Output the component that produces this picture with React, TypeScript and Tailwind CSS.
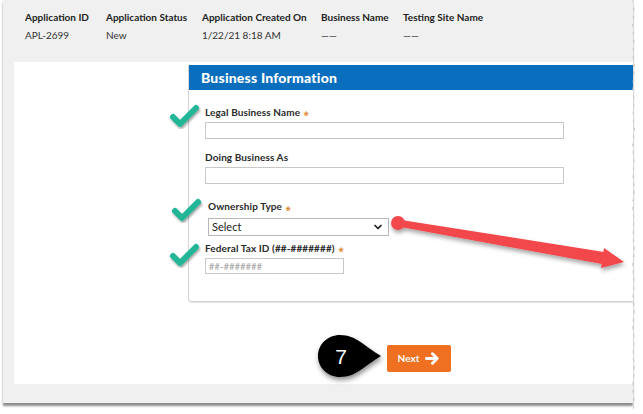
import { ChevronDown } from 'lucide-react';

const columns = [
  { label: 'Application ID', value: 'APL-2699', w: 'w-[81px]' },
  { label: 'Application Status', value: 'New', w: 'w-[96px]' },
  { label: 'Application Created On', value: '1/22/21 8:18 AM', w: 'w-[119px]' },
  { label: 'Business Name', value: '——', w: 'w-[82px]' },
  { label: 'Testing Site Name', value: '——', w: 'w-[100px]' },
];

const Star = () => <span className="ml-[3px] text-[7px] text-[#e0913f] align-middle">★</span>;

const Check = ({ className }: { className: string }) => (
  <svg className={`absolute ${className}`} width="32" height="28" viewBox="0 0 32 28">
    <defs>
      <filter id="cs" x="-30%" y="-30%" width="160%" height="160%">
        <feDropShadow dx="1" dy="2" stdDeviation="1.2" floodColor="#000" floodOpacity="0.35" />
      </filter>
    </defs>
    <path d="M4 14 L11 21 L27 5" fill="none" stroke="#22b596" strokeWidth="6" strokeLinecap="round" strokeLinejoin="round" filter="url(#cs)" />
  </svg>
);

export default function App() {
  return (
    <div className="relative w-[643px] h-[414px] overflow-hidden bg-white" style={{ fontFamily: 'Lato, "Open Sans", sans-serif' }}>
      {/* screenshot panel */}
      <div className="ml-[3px] w-[630px] h-[403px] bg-[#f0f0f0] shadow-[0_3px_2px_rgba(0,0,0,0.45)] overflow-hidden flex flex-col">
        <div className="h-[62px] pl-[22px] pt-[11px] flex text-[10px] text-[#222]">
          {columns.map((c) => (
            <div key={c.label} className={`${c.w} shrink-0`}>
              <div className="font-bold leading-[12px]">{c.label}</div>
              <div className="mt-[6px] leading-[12px] text-[#333]">{c.value}</div>
            </div>
          ))}
        </div>

        <div className="ml-[11px] h-[322px] bg-white overflow-hidden">
          {/* card */}
          <div className="ml-[174px] mt-[3px] w-[470px] h-[237px] border-l border-b border-[#d6d6d6] rounded-bl-[4px] shadow-[0_1px_1px_rgba(0,0,0,0.12)]">
            <div className="h-[25px] bg-[#0a6ebe] pl-[12px] flex items-center">
              <span className="text-white font-black text-[14px] tracking-[0.2px]">Business Information</span>
            </div>
            <div className="pl-[16px] text-[#2a2a2a]">
              <div className="mt-[16px] text-[10px] font-bold leading-[12px] tracking-[0.1px]">Legal Business Name<Star /></div>
              <div className="mt-[3px] w-[359px] h-[17px] border border-[#c8c8c8]" />

              <div className="mt-[12px] text-[10px] font-bold leading-[12px] tracking-[0.1px]">Doing Business As</div>
              <div className="mt-[4px] w-[359px] h-[17px] border border-[#c8c8c8]" />

              <div className="mt-[16px] ml-[3px] text-[10px] font-bold leading-[12px] tracking-[0.1px]">Ownership Type<Star /></div>
              <div className="mt-[4px] ml-[3px] w-[181px] h-[18px] border border-[#b8b8b8] flex items-center justify-between pl-[3px] pr-[4px]">
                <span className="text-[11px] text-[#222]">Select</span>
                <ChevronDown size={12} strokeWidth={3.5} className="text-[#222]" />
              </div>

              <div className="mt-[6px] text-[10px] font-bold leading-[12px] tracking-[0.1px]">Federal Tax ID (##-#######)<Star /></div>
              <div className="mt-[3px] w-[139px] h-[16px] border border-[#c8c8c8] flex items-center pl-[3px]">
                <span className="text-[9px] text-[#a0a0a0] tracking-[0.3px]">##-#######</span>
              </div>
            </div>
          </div>

          <div className="ml-[373px] mt-[43px] w-[64px] h-[27px] rounded-[2px] bg-[#ef7021] flex items-center justify-center gap-[6px]">
            <span className="text-white text-[10px] font-bold">Next</span>
            <svg width="15" height="13" viewBox="0 0 15 13">
              <path d="M1.5 6.5 H12 M7.5 1.8 L12.2 6.5 L7.5 11.2" fill="none" stroke="#fff" strokeWidth="3" strokeLinecap="round" strokeLinejoin="round" />
            </svg>
          </div>
        </div>
      </div>

      {/* torn right edge */}
      <svg className="absolute left-[630px] top-0" width="13" height="414" viewBox="0 0 13 414">
        <path d="M3 0 L4 12 L2.5 26 L4 40 L3 55 L4.5 70 L2.5 86 L4 100 L3 116 L4.5 130 L2.5 146 L4 160 L3 176 L4.5 190 L2.5 206 L4 220 L3 236 L4.5 250 L2.5 266 L4 280 L3 296 L4.5 310 L2.5 326 L4 340 L3 356 L4.5 370 L2.5 386 L4 400 L3 414" fill="none" stroke="#bdbdbd" strokeWidth="0.8" strokeDasharray="3 5" />
      </svg>

      {/* annotations */}
      <Check className="left-[169px] top-[103px]" />
      <Check className="left-[171px] top-[197px]" />
      <Check className="left-[169px] top-[242px]" />

      <svg className="absolute left-0 top-0 pointer-events-none" width="643" height="414" viewBox="0 0 643 414">
        <defs>
          <filter id="as" x="-10%" y="-50%" width="120%" height="200%">
            <feDropShadow dx="1" dy="3" stdDeviation="2" floodColor="#000" floodOpacity="0.35" />
          </filter>
          <filter id="bs" x="-30%" y="-30%" width="160%" height="160%">
            <feDropShadow dx="1" dy="3" stdDeviation="2.5" floodColor="#000" floodOpacity="0.45" />
          </filter>
        </defs>
        <g filter="url(#as)" fill="#f2474b">
          <circle cx="398" cy="223" r="7" />
          <path d="M398 219.5 L604 252 L602 264 L398 226.5 Z" />
          <path d="M604 248 L624 262 L601 268 Z" />
        </g>
        <g filter="url(#bs)">
          <path d="M340 335 C356 335 364 346 381 356 C364 366 356 377 340 377 C328 377 318 368 318 356 C318 344 328 335 340 335 Z" fill="#000" />
        </g>
      </svg>
      <div className="absolute left-[320px] top-[335px] w-[42px] h-[42px] flex items-center justify-center text-white text-[21px] leading-none" style={{ fontFamily: '"Liberation Sans", Arial, sans-serif' }}>
        7
      </div>
    </div>
  );
}
